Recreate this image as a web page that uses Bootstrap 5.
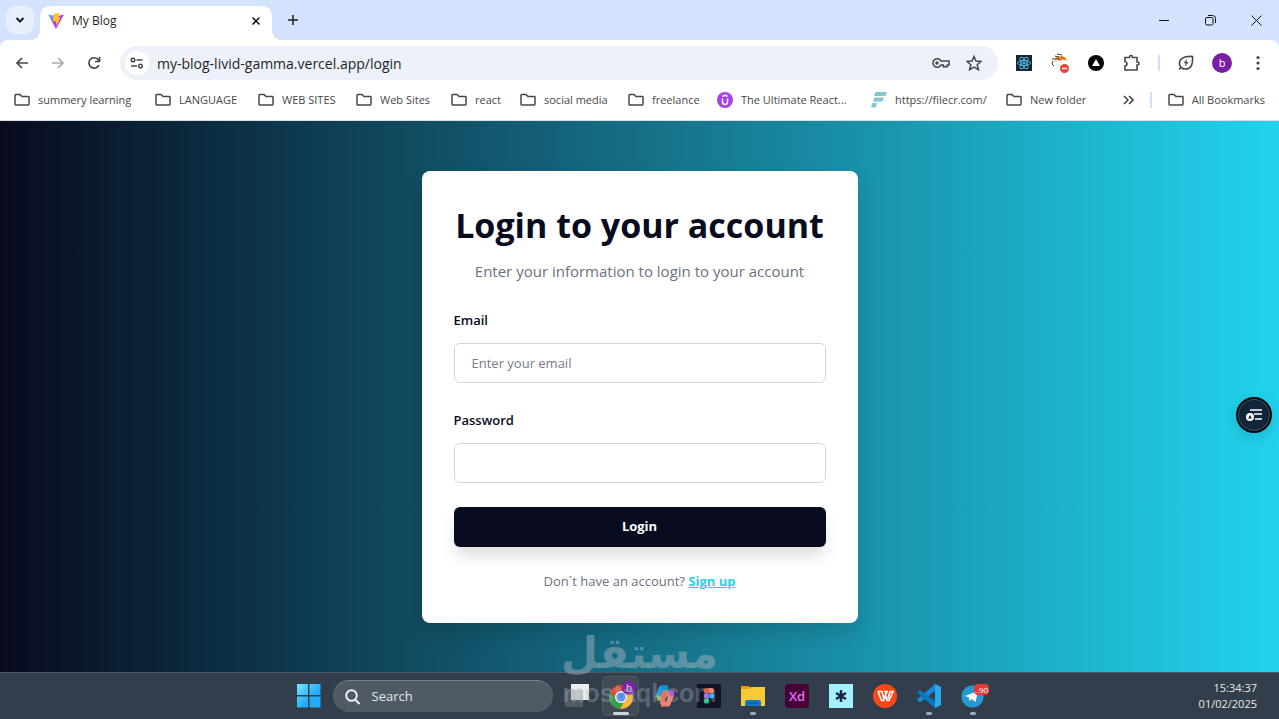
<!DOCTYPE html>
<html lang="en">
<head>
<meta charset="utf-8">
<meta name="viewport" content="width=device-width, initial-scale=1">
<title>My Blog</title>
<link href="https://cdn.jsdelivr.net/npm/bootstrap@5.3.0/dist/css/bootstrap.min.css" rel="stylesheet">
<style>
  :root { --ink:#090c1f; --frame:#d3e3fd; --glyph:#474747; }
  body { font-family:"Open Sans","Noto Sans",sans-serif; font-size:13px; color:#1f1f1f; background:#fff; }
  button { border:0; background:none; padding:0; color:inherit; }
  svg { display:block; flex:none; }
  a { color:inherit; text-decoration:none; }
  .line { fill:none; stroke:currentColor; stroke-width:2; }

  /* window frame */
  .tab-strip { height:40px; background:var(--frame); padding-left:6px; }
  .tab-search { width:28px; height:28px; border-radius:10px; background:#e9f0fd; margin-right:6px; }
  .page-tab { position:relative; width:232px; height:34px; margin-top:6px; padding:0 10px 4px 8px; background:#fff; border-radius:10px 10px 0 0; font-size:12px; }
  .page-tab::before, .page-tab::after { content:""; position:absolute; bottom:0; width:10px; height:10px; }
  .page-tab::before { left:-10px; background:radial-gradient(circle at 0 0,transparent 10px,#fff 10px); }
  .page-tab::after { right:-10px; background:radial-gradient(circle at 100% 0,transparent 10px,#fff 10px); }
  .win-btn { width:46px; height:40px; color:#111; }
  .corner { background:var(--frame); }
  .toolbar { height:46px; background:#fff; border-radius:8px 8px 0 0; padding-right:3px; color:var(--glyph); }
  .tool-btn { width:36px; height:36px; }
  .address { height:34px; border-radius:17px; background:#edf1fa; padding:0 16px 0 5px; margin:0 8px; }
  .address input { border:0; background:none; outline:0; padding:0; font-size:14px; color:#1f1f1f; }
  .site-info { width:24px; height:24px; border-radius:50%; background:#fff; }
  .rule { width:2px; height:16px; background:#cfe0fc; }
  .avatar { width:20px; height:20px; border-radius:50%; background:#7a1fa2; color:#fff; font-size:11px; }
  .bookmarks { height:35px; border-bottom:1px solid #dcdfe4; padding:0 14px 6px; font-size:11px; color:var(--glyph); }
  .bookmarks a { display:flex; align-items:center; gap:8px; white-space:nowrap; }
  .marks { display:grid; grid-template-columns:141px 103px 98px 95px 69px 108px 89px 154px 135px auto; }

  /* page */
  .login-page { position:relative; background:linear-gradient(to right,#080b1e,#22d3ee); }
  .login-card { width:436px; padding:32px; border-radius:8px; background:#fff; box-shadow:0 10px 20px rgba(0,0,0,.13); }
  .login-card h1 { font-size:34px; line-height:44px; font-weight:700; color:var(--ink); margin-bottom:12px; white-space:nowrap; }
  .muted { color:#6b7280; }
  .intro { font-size:15px; line-height:24px; margin-bottom:26px; }
  .field + .field { margin-top:26px; }
  .login-card label { line-height:22px; font-weight:600; color:var(--ink); margin-bottom:12px; }
  .login-card .form-control { height:40px; border:1px solid #d1d5db; border-radius:6px; padding:0 17px; font-size:13px; }
  .login-card .form-control::placeholder { color:#757b8a; opacity:1; }
  .login-btn { height:40px; border-radius:6px; background:var(--ink); color:#fff; font-weight:700; box-shadow:0 10px 16px -2px rgba(0,0,0,.14); }
  .signup { line-height:20px; margin-top:24px; }
  .signup a { color:#22d3ee; font-weight:700; text-decoration:underline; }
  .reader { position:absolute; right:7px; top:276px; width:36px; height:36px; border-radius:50%; background:#10243a; border:2px solid #06090f; box-shadow:0 4px 14px rgba(0,0,0,.15),inset 0 0 0 1px #44515e; color:#fff; }

  /* taskbar */
  .taskbar { position:relative; height:47px; background:#323e4b; border-top:1px solid #4b5968; color:#fff; }
  .task-search { width:220px; height:32px; border-radius:16px; background:#4e5a65; border-top:1px solid #75808a; padding:0 12px; margin-right:2px; color:#eee; }
  .task-search input { background:none; border:0; padding:0; color:#eee; font-size:13px; min-width:0; }
  .task-search input::placeholder { color:#e4e6e9; opacity:1; }
  .apps { padding-left:12px; }
  .app { position:relative; width:44px; height:46px; }
  .app.running::after { content:""; position:absolute; bottom:4px; left:19px; width:6px; height:3px; border-radius:2px; background:#a5acb3; }
  .app.active::before { content:""; position:absolute; inset:3px 4px 3px 3px; border-radius:5px; background:#414b56; border:1px solid #4e5964; }
  .app.active::after { left:14px; width:16px; background:#d2d5d8; }
  .app svg { position:relative; }
  .clock { position:absolute; right:22px; top:7px; font-size:11px; line-height:16px; text-align:right; color:#e8eaec; }
  .watermark { position:absolute; left:0; right:0; bottom:12px; text-align:center; color:rgba(170,180,190,.47); pointer-events:none; }
  .watermark .arabic { font:bold 43px/52px "DejaVu Sans",sans-serif; }
  .watermark .latin { font:bold 25px/28px "Liberation Sans",sans-serif; color:rgba(170,180,195,.35); }
</style>
</head>
<body class="d-flex flex-column min-vh-100 position-relative">
<svg width="0" height="0" class="position-absolute" aria-hidden="true">
  <symbol id="folder" viewBox="0 0 16 16"><path d="M1 12.5V3.2q0-.7.7-.7H6l2 2h6.300q.7 0 .7.7v7.100q0 .7-.7.7H1.700q-.7 0-.7-.7Z" fill="none" stroke="#474747" stroke-width="1.500"/></symbol>
</svg>

<header>
  <div class="tab-strip d-flex align-items-center">
    <button class="tab-search d-flex align-items-center justify-content-center" aria-label="Search tabs"><svg width="10" height="8" class="line"><path d="m1.500 2 3.500 3.500L8.500 2"/></svg></button>
    <div class="page-tab d-flex align-items-center">
      <svg width="16" height="16" viewBox="0 0 16 16" class="me-2"><defs><linearGradient id="v" x2="1" y2=".6"><stop stop-color="#41d1ff"/><stop offset=".6" stop-color="#b241e8"/></linearGradient></defs><path d="M0 1.500 8 16 16 1.500 10 3 5 2.500Z" fill="url(#v)"/><path d="m5.500 1 6-1-1 4.500h2L8.500 13 8 8H5Z" fill="#ffc61f"/></svg>
      <span class="flex-grow-1">My Blog</span>
      <button aria-label="Close tab"><svg width="12" height="12" class="line"><path d="m2.500 2.500 7 7M9.500 2.500l-7 7" stroke-width="1.600"/></svg></button>
    </div>
    <button class="ms-3" aria-label="New tab"><svg width="10" height="10" class="line"><path d="M5 0v10M0 5h10" stroke-width="1.500"/></svg></button>
    <div class="ms-auto d-flex">
      <button class="win-btn d-flex align-items-center justify-content-center" aria-label="Minimize"><svg width="10" height="10"><path d="M0 5.500h10" stroke="#111"/></svg></button>
      <button class="win-btn d-flex align-items-center justify-content-center" aria-label="Restore"><svg width="11" height="11" fill="none" stroke="#111"><rect x=".5" y="2.500" width="7.500" height="7.500" rx="1.500"/><path d="M3 .5h4.500q3 0 3 3V8"/></svg></button>
      <button class="win-btn d-flex align-items-center justify-content-center" aria-label="Close"><svg width="11" height="11" stroke="#111"><path d="m.5.5 10 10m0-10-10 10"/></svg></button>
    </div>
  </div>
  <div class="corner">
  <div class="toolbar d-flex align-items-center">
    <nav class="d-flex ps-1" aria-label="History">
      <button class="tool-btn d-flex align-items-center justify-content-center" aria-label="Back"><svg width="14" height="12" class="line"><path d="M13 6H2M7 1 2 6l5 5" stroke-width="1.700"/></svg></button>
      <button class="tool-btn d-flex align-items-center justify-content-center" aria-label="Forward" disabled><svg width="14" height="12" fill="none" stroke="#a5a8aa"><path d="M1 6h11M7 1l5 5-5 5" stroke-width="1.700"/></svg></button>
      <button class="tool-btn d-flex align-items-center justify-content-center" aria-label="Reload"><svg width="14" height="14" class="line"><path d="M11.800 9.200A5.200 5.200 0 1 1 11 3.500l1.200 1.500M12.500 1v4.500H8" stroke-width="1.700"/></svg></button>
    </nav>
    <div class="address d-flex align-items-center flex-grow-1 ms-2">
      <button class="site-info d-flex align-items-center justify-content-center me-2" aria-label="Site information"><svg width="14" height="12" class="line"><g stroke-width="1.500"><circle cx="3" cy="3" r="1.800"/><path d="M6.500 3h6M1 9h6"/><circle cx="10.500" cy="9" r="1.800"/></g></svg></button>
      <input class="flex-grow-1" type="text" aria-label="Address" value="my-blog-livid-gamma.vercel.app/login">
      <button class="me-3" aria-label="Passwords"><svg width="18" height="12" viewBox="0 0 19 12" class="line"><path d="M9.500 4A4.500 4.500 0 1 0 9.500 8H12V10h4V8h2V4Z" stroke-width="1.600"/><circle cx="5.200" cy="6" r="1.800" fill="#474747" stroke="none"/></svg></button>
      <button aria-label="Bookmark this tab"><svg width="16" height="16" viewBox="0 0 16 16" class="line"><path d="m8 1.500 2 4.600 5 .4-3.800 3.300 1.200 4.900L8 12.100l-4.400 2.600 1.200-4.900L1 6.500l5-.4Z" stroke-width="1.500"/></svg></button>
    </div>
    <div class="d-flex align-items-center">
      <button class="tool-btn d-flex align-items-center justify-content-center" aria-label="React tools"><svg width="16" height="16" viewBox="0 0 16 16"><path d="M0 0h16v16H0z" fill="#182333"/><g fill="none" stroke="#50b9df"><ellipse cx="8" cy="8" rx="6.500" ry="2.500"/><ellipse cx="8" cy="8" rx="6.500" ry="2.500" transform="rotate(60 8 8)"/><ellipse cx="8" cy="8" rx="6.500" ry="2.500" transform="rotate(120 8 8)"/></g><circle cx="8" cy="8" r="1.300" fill="#50b9df"/></svg></button>
      <button class="tool-btn d-flex align-items-center justify-content-center" aria-label="Blocked extension"><svg width="18" height="20" viewBox="0 0 18 20"><path d="M4 5q6-4 11 0l1 3-5-2-5 1-3 2 2-3" fill="#f6a42b"/><path d="M1 6h4l3-1M6 1l5 1M4 3l4 1M2 8l-1 3 2 2" fill="none" stroke="#45403a"/><path d="m10 4 4 2M7 7l4-1" stroke="#e54f24" stroke-width="1.500"/><circle cx="13.500" cy="15.500" r="4.500" fill="#ea4335"/><path d="M11 15.500h5" stroke="#fff" stroke-width="1.500"/></svg></button>
      <button class="tool-btn d-flex align-items-center justify-content-center" aria-label="Vercel"><svg width="16" height="16"><circle cx="8" cy="8" r="8"/><path d="m8 4 4 7H4Z" fill="#fff"/></svg></button>
      <button class="tool-btn d-flex align-items-center justify-content-center" aria-label="Extensions"><svg width="18" height="18" viewBox="0 0 18 18" class="line"><path d="M2 3.500h4.500V3A1.500 1.500 0 0 1 9.500 3v.5H14V8h.5a1.500 1.500 0 0 1 0 3H14v5H2v-4q2-.3 2-2.200T2 7.500Z" stroke-width="1.600"/></svg></button>
      <span class="rule mx-2"></span>
      <button class="tool-btn d-flex align-items-center justify-content-center" aria-label="Energy saver"><svg width="16" height="16" viewBox="0 0 16 16" class="line"><path d="M14.500 1.500C6 .8 1.500 3.500 1.500 8.500A5.500 5.500 0 0 0 7 14c6.500 0 8-5 7.500-12.500ZM3.500 12 1 14.500" stroke-width="1.600"/><path d="M9 4 5.500 8.300h2.300L7 11.500l3.700-4.300H8.500Z" fill="#474747" stroke="none"/></svg></button>
      <button class="tool-btn d-flex align-items-center justify-content-center" aria-label="Profile"><span class="avatar d-flex align-items-center justify-content-center">b</span></button>
      <button class="tool-btn d-flex align-items-center justify-content-center" aria-label="Menu"><svg width="4" height="16" fill="#474747"><circle cx="2" cy="2.500" r="1.600"/><circle cx="2" cy="8" r="1.600"/><circle cx="2" cy="13.500" r="1.600"/></svg></button>
    </div>
  </div>
  </div>
  <nav class="bookmarks d-flex align-items-center" aria-label="Bookmarks">
    <div class="marks">
      <a href="#"><svg width="16" height="16"><use href="#folder"/></svg>summery learning</a>
      <a href="#"><svg width="16" height="16"><use href="#folder"/></svg>LANGUAGE</a>
      <a href="#"><svg width="16" height="16"><use href="#folder"/></svg>WEB SITES</a>
      <a href="#"><svg width="16" height="16"><use href="#folder"/></svg>Web Sites</a>
      <a href="#"><svg width="16" height="16"><use href="#folder"/></svg>react</a>
      <a href="#"><svg width="16" height="16"><use href="#folder"/></svg>social media</a>
      <a href="#"><svg width="16" height="16"><use href="#folder"/></svg>freelance</a>
      <a href="#"><svg width="16" height="16"><circle cx="8" cy="8" r="8" fill="#a83fe8"/><path d="M5.500 6.500v3.500q0 2.500 2.500 2.500t2.500-2.500V6.500M5.500 4.500 8 3l2.500 1.500" fill="none" stroke="#fff" stroke-width="1.500"/></svg>The Ultimate React...</a>
      <a href="#"><svg width="16" height="16"><path d="M4.500 0H16l-1.500 4H3ZM3.500 5.500H13l-1.500 4H2ZM1.500 11H6l-1.500 4.500H0Z" fill="#86c5d4"/></svg>https://filecr.com/</a>
      <a href="#"><svg width="16" height="16"><use href="#folder"/></svg>New folder</a>
    </div>
    <div class="d-flex align-items-center ms-auto">
      <button aria-label="More bookmarks"><svg width="11" height="10" class="line"><path d="m1 1 4 4-4 4m5-8 4 4-4 4" stroke-width="1.600"/></svg></button>
      <span class="rule mx-3"></span>
      <a href="#"><svg width="16" height="16"><use href="#folder"/></svg>All Bookmarks</a>
    </div>
  </nav>
</header>

<main class="login-page flex-grow-1 d-flex align-items-center justify-content-center">
  <form class="login-card">
    <h1 class="text-center">Login to your account</h1>
    <p class="intro muted text-center">Enter your information to login to your account</p>
    <div class="field">
      <label class="d-block" for="email">Email</label>
      <input class="form-control" id="email" type="email" placeholder="Enter your email">
    </div>
    <div class="field">
      <label class="d-block" for="password">Password</label>
      <input class="form-control" id="password" type="password">
    </div>
    <button class="login-btn w-100 mt-4" type="submit">Login</button>
    <p class="signup muted text-center mb-0">Don`t have an account? <a href="#">Sign up</a></p>
  </form>
  <button class="reader d-flex align-items-center justify-content-center" aria-label="Reading tools"><svg width="18" height="14" stroke="#fff" fill="none"><path d="M5 2h12M9 6h8M10 11h7" stroke-width="1.600"/><circle cx="5" cy="9" r="4" fill="#fff" stroke="none"/><path d="m5 7 2 3.500H3Z" fill="#10243a" stroke="none"/></svg></button>
</main>

<footer class="taskbar d-flex align-items-center justify-content-center">
  <div class="d-flex align-items-center apps">
    <button class="me-2 pe-1" aria-label="Start"><svg width="24" height="24"><defs><linearGradient id="w" x2="1" y2="1"><stop stop-color="#78e4ff"/><stop offset=".6" stop-color="#22adf6"/></linearGradient></defs><path d="M0 0h11v11H0zM12.500 0h11v11h-11zM0 12.500h11v11H0zM12.500 12.500h11v11h-11z" fill="url(#w)"/></svg></button>
    <div class="task-search d-flex align-items-center">
      <svg width="15" height="16" class="line me-2"><circle cx="6.500" cy="6.500" r="5.300"/><path d="m10.500 11 4 4"/></svg>
      <input type="search" class="ms-1" placeholder="Search" aria-label="Search">
    </div>
    <button class="app d-flex align-items-center justify-content-center" aria-label="Task view"><svg width="24" height="24"><path d="M0 6h18v17H0z" fill="#555c63"/><path d="M6 0h18v16H6z" fill="#eceeed"/><path d="M6 6h12v10H6z" fill="#c4c9ca"/></svg></button>
    <button class="app active running d-flex align-items-center justify-content-center" aria-label="Chrome"><svg width="30" height="32" viewBox="0 0 30 32"><circle cx="15" cy="17" r="12" fill="#ea4335"/><path d="M27 17a12 12 0 0 1-13 12l5-10-4-7h11Z" fill="#fbbc31"/><path d="M4.600 11A12 12 0 0 0 14 29l5-9-8 1Z" fill="#34a150"/><circle cx="15" cy="17" r="6" fill="#fff"/><circle cx="15" cy="17" r="4.500" fill="#4b91ed"/><circle cx="23" cy="8" r="7" fill="#7a22a6"/><text x="20" y="12" font-size="10" fill="#ddd">b</text></svg></button>
    <button class="app d-flex align-items-center justify-content-center" aria-label="Copilot"><svg width="24" height="24" viewBox="0 0 24 24" fill="none" stroke-width="5" stroke-linejoin="round"><path d="M15 4H8.500L4 14" stroke="#299de2"/><path d="M4 14h6l3-9" stroke="#8bc657"/><path d="m9 20 2-10h9" stroke="#ed6c62"/><path d="M8 20h7l4-10" stroke="#f08171"/><path d="M16 9h5" stroke="#b454e4"/><path d="M15 4H8" stroke="#168fd8"/></svg></button>
    <button class="app d-flex align-items-center justify-content-center" aria-label="Figma"><svg width="24" height="24"><rect width="24" height="24" rx="2" fill="#111422"/><path d="M12 4H9.500a2.600 2.600 0 0 0 0 5.200H12Z" fill="#f24e1e"/><path d="M12 4h2.500a2.600 2.600 0 0 1 0 5.200H12Z" fill="#ff7262"/><path d="M12 9.200H9.500a2.600 2.600 0 0 0 0 5.200H12Z" fill="#a259ff"/><circle cx="14.600" cy="11.800" r="2.600" fill="#1abcfe"/><path d="M12 14.400H9.500a2.600 2.600 0 1 0 2.500 2.600Z" fill="#0fcf80"/></svg></button>
    <button class="app running d-flex align-items-center justify-content-center" aria-label="File Explorer"><svg width="24" height="24"><path d="M0 2h8l2 3H0Z" fill="#e89c13"/><path d="M0 5h8l2-2h14v19H0Z" fill="#fac936"/><path d="M4 22v-4q0-2 2-2h12q2 0 2 2v4Z" fill="#1479c9"/><path d="M7 19h10" stroke="#0b4b8a"/></svg></button>
    <button class="app d-flex align-items-center justify-content-center" aria-label="Adobe XD"><svg width="24" height="24"><rect width="24" height="24" rx="4" fill="#470137"/><text x="12" y="17" text-anchor="middle" font-size="13" font-weight="600" fill="#e070f6">Xd</text></svg></button>
    <button class="app d-flex align-items-center justify-content-center" aria-label="Notes"><svg width="24" height="24"><path d="M0 0h24v24H0z" fill="#a2f2ff"/><path d="M12 6v12M7 9l10 6M17 9 7 15" stroke="#17254d" stroke-width="2.500"/></svg></button>
    <button class="app d-flex align-items-center justify-content-center" aria-label="WPS Office"><svg width="24" height="24"><circle cx="12" cy="12" r="12" fill="#ff4616"/><path d="M5 7.500h4l2 8 3-8h-3M5 7.500l3.500 9h2l2-6 1.500 6h2L20 7.500h-3l-2 7" fill="none" stroke="#fff" stroke-width="1.600"/></svg></button>
    <button class="app running d-flex align-items-center justify-content-center" aria-label="Visual Studio Code"><svg width="24" height="24"><path d="M18 0v7L3 18.500l-3-3Z" fill="#1689d1"/><path d="M0 8.500 3 6l15 11v7Z" fill="#0878bd"/><path d="m18 0 6 3v18l-6 3Z" fill="#29a8f2"/></svg></button>
    <button class="app running d-flex align-items-center justify-content-center" aria-label="Telegram"><svg width="24" height="24" overflow="visible"><circle cx="11.500" cy="12.500" r="11" fill="#259bd2"/><path d="m4 12 13-5-2.500 11-4-3-2 2-.5-3.500Z" fill="#fff"/><rect x="13" y="0" width="15" height="11" rx="4" fill="#e53a35"/><text x="20.500" y="9" text-anchor="middle" font-size="8" fill="#fff">..90</text></svg></button>
  </div>
  <div class="clock">15:34:37<br>01/02/2025</div>
</footer>
<div class="watermark"><div class="arabic" lang="ar" dir="rtl">مستقل</div><div class="latin">mostaql.com</div></div>
<script src="https://cdn.jsdelivr.net/npm/bootstrap@5.3.0/dist/js/bootstrap.bundle.min.js"></script>
</body>
</html>
